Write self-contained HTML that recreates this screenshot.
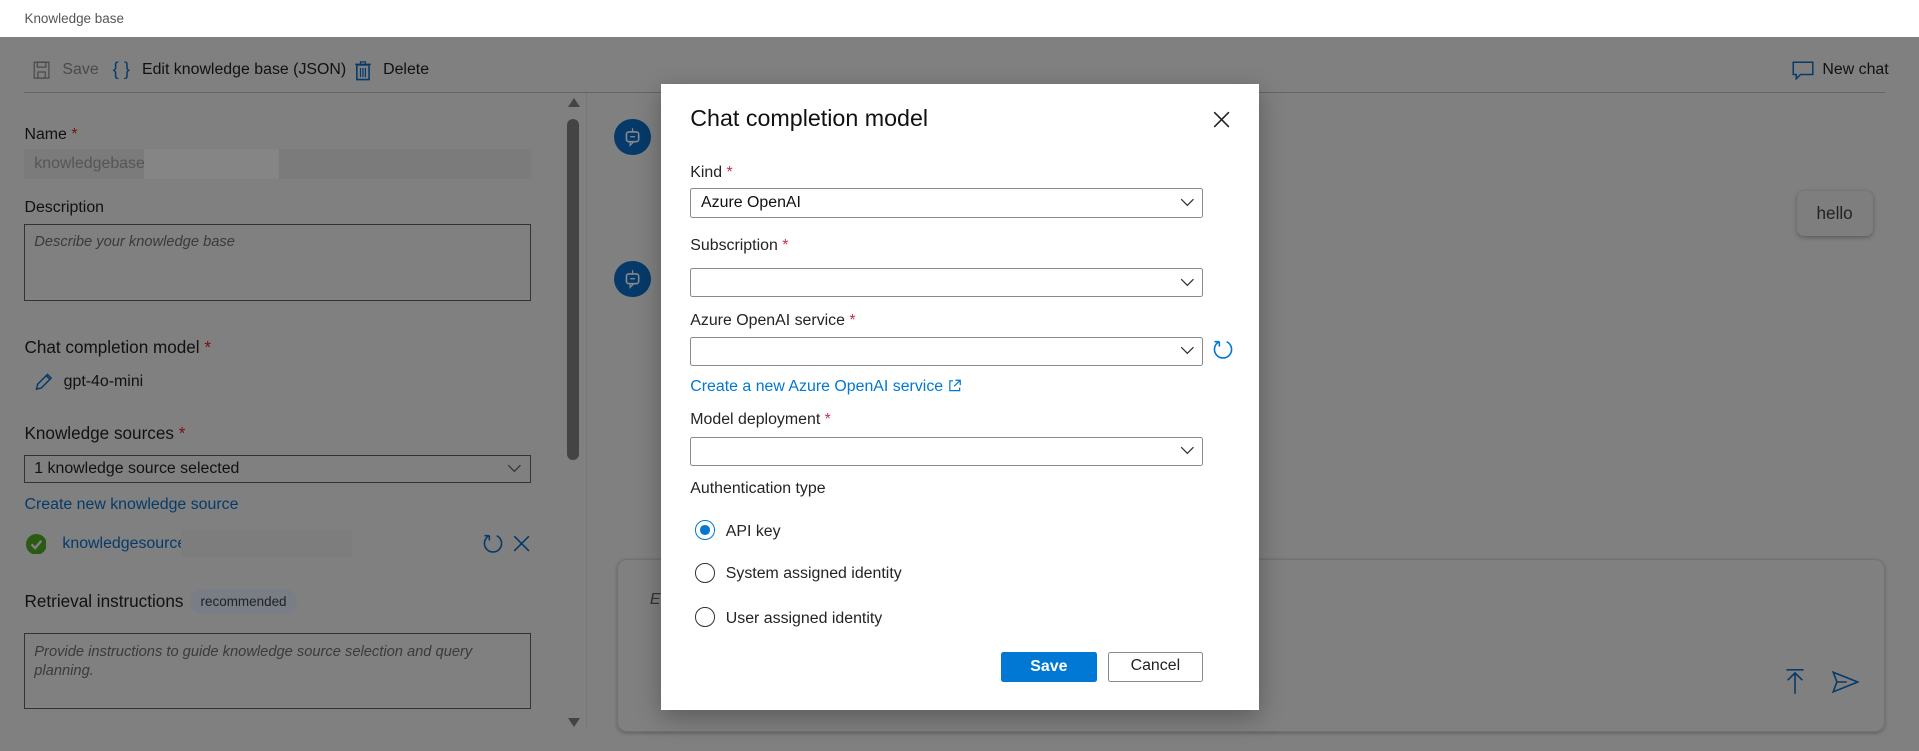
<!DOCTYPE html>
<html><head><meta charset="utf-8"><style>
html,body{margin:0;padding:0;overflow:hidden;width:1919px;height:751px}
#root{zoom:1.2239;width:1568px;height:614px;position:relative;font-family:"Liberation Sans",sans-serif;color:#111;background:#fff;overflow:hidden}
.a{position:absolute;white-space:nowrap}
.gray{position:absolute;left:0;top:30px;width:1568px;height:600px;background:#808080}
.lbl{font-size:13px;color:#111}
.req{color:#7a0f0f}
.box{position:absolute;border:1px solid #333;box-sizing:border-box}
.mlbl{font-size:13px;color:#242424}
.mreq{color:#c4314b}
.sel{position:absolute;left:564px;width:419px;height:24px;border:1px solid #8a8a8a;box-sizing:border-box;border-radius:2px;background:#fff}
.sel svg{position:absolute;right:6px;top:7px}
.radio{position:absolute;left:568px;width:16px;height:16px;border:1px solid #333;border-radius:50%;box-sizing:border-box}
</style></head><body><div id="root">
<div class="a" style="left:20px;top:-27px;font-size:24px;font-weight:bold">knowledgebase</div>
<div class="a" style="left:20px;top:9px;font-size:11px;color:#555">Knowledge base</div>
<div class="gray"></div>

<!-- toolbar -->
<svg class="a" style="left:27px;top:50px" width="14" height="15" viewBox="0 0 14 15"><rect x="1" y="1" width="12" height="13" fill="none" stroke="#4a4a4a"/><rect x="3.5" y="1" width="7" height="4" fill="none" stroke="#4a4a4a"/><rect x="4" y="9" width="6" height="5" fill="none" stroke="#4a4a4a"/></svg>
<div class="a" style="left:51px;top:50px;font-size:13px;color:#4a4a4a">Save</div>
<div class="a" style="left:92px;top:47px;font-size:15px;color:#063a6a">{ }</div>
<div class="a" style="left:116px;top:50px;font-size:13px;color:#111">Edit knowledge base (JSON)</div>
<svg class="a" style="left:290px;top:49px" width="13" height="17" viewBox="0 0 13 17"><rect x="1.5" y="4" width="10" height="12" fill="none" stroke="#063a6a" stroke-width="1.3"/><path d="M0 3.5H13M4.5 3.5V1.5H8.5V3.5M4.5 6.5V14M6.5 6.5V14M8.5 6.5V14" stroke="#063a6a" fill="none"/></svg>
<div class="a" style="left:313px;top:50px;font-size:13px;color:#111">Delete</div>
<svg class="a" style="left:1464px;top:50px" width="18" height="16" viewBox="0 0 18 16"><path d="M1 1H17V11H7L3.5 14.5V11H1Z" fill="none" stroke="#063a6a" stroke-width="1.2"/></svg>
<div class="a" style="left:1489px;top:50px;font-size:13px;color:#111">New chat</div>
<div class="a" style="left:20px;top:75px;width:1520px;height:1px;background:#666"></div>

<!-- left panel -->
<div class="a lbl" style="left:20px;top:103px">Name <span class="req">*</span></div>
<div class="a" style="left:20px;top:122px;width:414px;height:24px;background:#7b7b7b"></div>
<div class="a" style="left:118px;top:122px;width:110px;height:24px;background:#858585"></div>
<div class="a" style="left:28px;top:127px;font-size:13px;color:#555">knowledgebase</div>
<div class="a lbl" style="left:20px;top:163px">Description</div>
<div class="box" style="left:20px;top:183px;width:414px;height:63px"></div>
<div class="a" style="left:28px;top:191px;font-size:12px;font-style:italic;color:#3a3a3a">Describe your knowledge base</div>
<div class="a" style="left:20px;top:275px;font-size:14px;color:#111">Chat completion model <span class="req">*</span></div>
<svg class="a" style="left:28px;top:304px" width="16" height="16" viewBox="0 0 16 16"><path d="M2 14L3 10L11 2L14 5L6 13Z M10 3L13 6" fill="none" stroke="#063a6a" stroke-width="1.2"/></svg>
<div class="a" style="left:52px;top:305px;font-size:13px">gpt-4o-mini</div>
<div class="a" style="left:20px;top:346px;font-size:14px">Knowledge sources <span class="req">*</span></div>
<div class="box" style="left:20px;top:372px;width:414px;height:23px"></div>
<div class="a" style="left:28px;top:376px;font-size:13px">1 knowledge source selected</div>
<svg class="a" style="left:414px;top:379px" width="12" height="8"><path d="M1 1L6 6L11 1" fill="none" stroke="#333"/></svg>
<div class="a" style="left:20px;top:405px;font-size:13px;color:#063a6a">Create new knowledge source</div>
<svg class="a" style="left:21px;top:436px" width="17" height="17"><circle cx="8.5" cy="8.5" r="8.5" fill="#2a5a14"/><path d="M4.5 8.5L7.5 11.5L12.5 5.5" fill="none" stroke="#808080" stroke-width="2"/></svg>
<div class="a" style="left:51px;top:437px;font-size:13px;color:#063a6a">knowledgesource</div>
<div class="a" style="left:148px;top:433px;width:140px;height:22px;background:#7d7d7d"></div>
<svg class="a" style="left:394px;top:435px" width="18" height="18" viewBox="0 0 18 18"><path d="M6 3A7 7 0 1 0 12 3M6 3V7M6 3H2" fill="none" stroke="#063a6a" stroke-width="1.3"/></svg>
<svg class="a" style="left:419px;top:437px" width="14" height="14"><path d="M1 1L13 13M13 1L1 13" stroke="#063a6a" stroke-width="1.3"/></svg>
<div class="a" style="left:20px;top:483px;font-size:14px">Retrieval instructions</div>
<div class="a" style="left:155px;top:481px;width:88px;height:21px;border-radius:11px;background:#787d86;font-size:11px;text-align:center;line-height:21px;color:#222">recommended</div>
<div class="box" style="left:20px;top:517px;width:414px;height:62px"></div>
<div class="a" style="left:28px;top:525px;font-size:12px;font-style:italic;color:#3a3a3a;line-height:16px">Provide instructions to guide knowledge source selection and query<br>planning.</div>
<!-- scrollbar -->
<div class="a" style="left:464px;top:80px;width:0;height:0;border-left:5px solid transparent;border-right:5px solid transparent;border-bottom:8px solid #444"></div>
<div class="a" style="left:463px;top:97px;width:10px;height:279px;border-radius:5px;background:#444"></div>
<div class="a" style="left:464px;top:587px;width:0;height:0;border-left:5px solid transparent;border-right:5px solid transparent;border-top:8px solid #444"></div>
<div class="a" style="left:479px;top:76px;width:1px;height:520px;background:#777"></div>

<!-- chat -->
<div class="a" style="left:502px;top:97px;width:30px;height:30px;border-radius:50%;background:#063a6a"></div>
<div class="a" style="left:502px;top:213px;width:30px;height:30px;border-radius:50%;background:#063a6a"></div>
<svg class="a" style="left:510px;top:104px" width="14" height="16"><rect x="2" y="4" width="10" height="8" rx="2" fill="none" stroke="#8a8a8a" stroke-width="1.3"/><path d="M7 1V4M5 8H9M5 12L5 15L8 12" stroke="#8a8a8a" fill="none"/></svg>
<svg class="a" style="left:510px;top:220px" width="14" height="16"><rect x="2" y="4" width="10" height="8" rx="2" fill="none" stroke="#8a8a8a" stroke-width="1.3"/><path d="M7 1V4M5 8H9M5 12L5 15L8 12" stroke="#8a8a8a" fill="none"/></svg>
<div class="a" style="left:1468px;top:156px;width:62px;height:37px;border-radius:6px;background:#7e7e7e;box-shadow:0 1px 4px rgba(0,0,0,.3);font-size:14px;line-height:37px;text-align:center;color:#222">hello</div>
<div class="a" style="left:504px;top:457px;width:1036px;height:141px;border:1px solid #727272;border-radius:8px;box-sizing:border-box;box-shadow:0 1px 3px rgba(0,0,0,.25)"></div>
<div class="a" style="left:531px;top:483px;font-size:13px;font-style:italic;color:#333">E</div>
<svg class="a" style="left:1458px;top:546px" width="18" height="22"><path d="M2 1.5H16M9 21V4M3 10L9 4L15 10" fill="none" stroke="#063a6a" stroke-width="1.3"/></svg>
<svg class="a" style="left:1497px;top:548px" width="22" height="18"><path d="M1 1L21 9L1 17L4 9Z M4 9H12" fill="none" stroke="#063a6a" stroke-width="1.3"/></svg>

<!-- modal -->
<div class="a" style="left:540px;top:69px;width:489px;height:511px;background:#fff;box-shadow:0 6px 20px rgba(0,0,0,.3)"></div>
<div class="a" style="left:564px;top:86px;font-size:19px;color:#111">Chat completion model</div>
<svg class="a" style="left:991px;top:91px" width="14" height="14"><path d="M1 1L13 13M13 1L1 13" stroke="#222" stroke-width="1.3"/></svg>
<div class="a mlbl" style="left:564px;top:134px">Kind <span class="mreq">*</span></div>
<div class="sel" style="top:154px"><span class="a" style="left:8px;top:4px;font-size:13px;color:#111">Azure OpenAI</span><svg width="12" height="8"><path d="M1 1L6 6L11 1" fill="none" stroke="#333"/></svg></div>
<div class="a mlbl" style="left:564px;top:194px">Subscription <span class="mreq">*</span></div>
<div class="sel" style="top:219px"><svg width="12" height="8"><path d="M1 1L6 6L11 1" fill="none" stroke="#333"/></svg></div>
<div class="a mlbl" style="left:564px;top:255px">Azure OpenAI service <span class="mreq">*</span></div>
<div class="sel" style="top:275px"><svg width="12" height="8"><path d="M1 1L6 6L11 1" fill="none" stroke="#333"/></svg></div>
<svg class="a" style="left:990px;top:276px" width="18" height="18" viewBox="0 0 18 18"><path d="M6 3A7 7 0 1 0 12 3M6 3V7M6 3H2" fill="none" stroke="#0078d4" stroke-width="1.3"/></svg>
<div class="a" style="left:564px;top:309px;font-size:13px;color:#0078d4">Create a new Azure OpenAI service <svg width="11" height="11" style="vertical-align:-1px"><path d="M4 1.5H1.5V9.5H9.5V7M6 1H10V5M10 1L5 6" fill="none" stroke="#0078d4"/></svg></div>
<div class="a mlbl" style="left:564px;top:336px">Model deployment <span class="mreq">*</span></div>
<div class="sel" style="top:357px"><svg width="12" height="8"><path d="M1 1L6 6L11 1" fill="none" stroke="#333"/></svg></div>
<div class="a mlbl" style="left:564px;top:392px">Authentication type</div>
<div class="radio" style="top:425px;border-color:#0078d4"><div style="position:absolute;left:3px;top:3px;width:8px;height:8px;border-radius:50%;background:#0078d4"></div></div>
<div class="a mlbl" style="left:593px;top:427px">API key</div>
<div class="radio" style="top:460px"></div>
<div class="a mlbl" style="left:593px;top:462px">System assigned identity</div>
<div class="radio" style="top:496px"></div>
<div class="a mlbl" style="left:593px;top:498px">User assigned identity</div>
<div class="a" style="left:818px;top:533px;width:78px;height:24px;background:#0078d4;border-radius:2px;color:#fff;font-size:13px;font-weight:bold;text-align:center;line-height:24px">Save</div>
<div class="a" style="left:905px;top:533px;width:78px;height:24px;border:1px solid #8a8a8a;box-sizing:border-box;border-radius:2px;color:#222;font-size:13px;text-align:center;line-height:22px">Cancel</div>
</div></body></html>
